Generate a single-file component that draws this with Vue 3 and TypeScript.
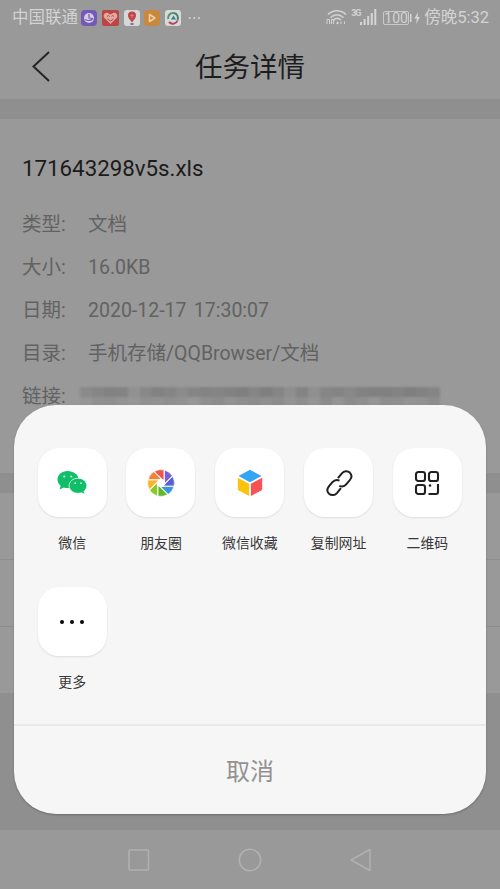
<script setup lang="ts">
interface InfoRow { label: string; value: string }
interface ShareItem { icon: string; label: string }

const info: InfoRow[] = [
  { label: '类型:', value: '文档' },
  { label: '大小:', value: '16.0KB' },
  { label: '日期:', value: '2020-12-17 17:30:07' },
  { label: '目录:', value: '手机存储/QQBrowser/文档' },
  { label: '链接:', value: '' },
]

const shareItems: ShareItem[] = [
  { icon: 'wechat', label: '微信' },
  { icon: 'moments', label: '朋友圈' },
  { icon: 'favorites', label: '微信收藏' },
  { icon: 'link', label: '复制网址' },
  { icon: 'qrcode', label: '二维码' },
  { icon: 'more', label: '更多' },
]

// Shades of the obscured link, one per mosaic cell
const mosaicTop = ['#8a8a8a', '#868686', '#828282', '#838383', '#919191', '#888888', '#828282', '#858585', '#8b8b8b', '#858585', '#838383', '#848484', '#828282', '#7f7f7f', '#858585', '#7f7f7f', '#858585', '#8e8e8e', '#838383', '#8f8f8f', '#868686', '#848484', '#888888', '#828282', '#808080', '#808080', '#838383', '#7f7f7f', '#828282', '#858585']
const mosaicBottom = ['#959595', '#909090', '#8f8f8f', '#929292', '#969696', '#909090', '#929292', '#8f8f8f', '#929292', '#979797', '#8f8f8f', '#8c8c8c', '#929292', '#8f8f8f', '#8c8c8c', '#909090', '#8c8c8c', '#939393', '#8e8e8e', '#959595', '#8b8b8b', '#949494', '#8b8b8b', '#8f8f8f', '#959595', '#8e8e8e', '#8f8f8f', '#949494', '#919191', '#8d8d8d']

// Clockwise from the top blade
const petals = ['#f0564b', '#7a60d8', '#5661d6', '#3c93e0', '#62b82e', '#8cc923', '#f7b52c', '#f48135']
</script>

<template>
  <div class="screen">
    <div class="status">
      <span class="carrier">中国联通</span>
      <div class="apps">
        <svg width="16" height="16" viewBox="0 0 16 16">
          <rect width="16" height="16" rx="4" fill="#7559b6" />
          <circle cx="8" cy="8" r="5" fill="#d6cce8" />
          <path d="M8 4v4l4 .5M4 9.5c3 1.5 6 1.2 8-1" fill="none" stroke="#7559b6" stroke-width="1.2" />
        </svg>
        <svg width="17" height="16" viewBox="0 0 17 16">
          <rect width="17" height="16" rx="2" fill="#be4545" />
          <path d="M8.5 14 2 7.4C1 4.5 3 2.5 5.3 2.8L8.5 4.5l3.2-1.7C14 2.5 16 4.5 15 7.4z" fill="#dfaaa0" />
          <path d="m5 6.500 1.500-1 1 1M9.500 6.500l1-1 1.500 1M5.500 9l3 2 3-2" fill="none" stroke="#be4545" />
        </svg>
        <svg width="16" height="16" viewBox="0 0 16 16">
          <rect width="16" height="16" rx="3" fill="#d7d7d7" />
          <path d="M8 12.500C6.500 10 4 8.500 4 5.500a4 4 0 0 1 8 0c0 3-2.500 4.500-4 7z" fill="#bf4548" />
          <path d="M6.500 5.500h3M8 4v4" stroke="#d68587" />
          <ellipse cx="8" cy="14" rx="2" ry="1" fill="#6876a0" />
        </svg>
        <svg width="16" height="16" viewBox="0 0 16 16">
          <rect width="16" height="16" rx="4" fill="#c9883b" />
          <path d="M5.500 4.500 11 8l-5.500 3.500z" fill="none" stroke="#ead2ad" stroke-width="1.500" stroke-linejoin="round" />
        </svg>
        <svg width="16" height="16" viewBox="0 0 16 16">
          <rect width="16" height="16" rx="3" fill="#d9d9d9" />
          <g fill="none" stroke-width="2">
            <path d="M3.200 9A5 5 0 0 1 9 3" stroke="#4f9b67" />
            <path d="M9 3a5 5 0 0 1 3.500 7" stroke="#4d837b" />
            <path d="M12.500 10.500A5 5 0 0 1 4 12" stroke="#b2465a" />
          </g>
          <path d="M8.500 5.500 11 9.500H6z" fill="#397e91" />
        </svg>
        <svg class="dots" width="13" height="16" viewBox="0 0 13 16" fill="#d0d0d0">
          <circle cx="1.700" cy="8" r="1.100" /><circle cx="6.300" cy="8" r="1.100" /><circle cx="10.900" cy="8" r="1.100" />
        </svg>
      </div>
      <div class="system">
        <svg width="21" height="17" viewBox="0 0 21 17" fill="none" stroke="#d2d2d2" stroke-width="1.700">
          <path d="M2 5.500c5-5 13-5 18 0M4.500 8.500c4-3.700 9-3.700 13 0M7.500 11c2.500-2 5-2 7.300 0" />
          <circle cx="11.500" cy="14" r="1.200" fill="#d2d2d2" stroke="none" />
          <path d="M1 15v-4.500h2.500V15M5.500 15v-4.500h2V15M15 15v-2.500M18.500 15v-2.500" stroke-width="1" />
        </svg>
        <span class="net">3G</span>
        <svg class="signal" width="17" height="16" viewBox="0 0 17 16" fill="#d5d5d5">
          <path d="M0 13h2v3H0zM3.600 10h2v6h-2zM7.200 7h2v9h-2zM10.800 4h2v12h-2zM14.300 0h2v16h-2z" />
        </svg>
        <span class="battery">100</span>
        <svg class="bolt" width="11" height="14" viewBox="0 0 11 14" fill="#d5d5d5">
          <path d="M0 3h1.500v8H0zM8 1 4.500 7.500h2.300L6 13l4-7H7.600z" />
        </svg>
        <span class="clock">傍晚5:32</span>
      </div>
    </div>

    <header class="header">
      <svg class="back" width="20" height="32" viewBox="0 0 20 32">
        <path d="M18 1 2.500 15.500 18 30" fill="none" stroke="#252525" stroke-width="2" />
      </svg>
      <h1>任务详情</h1>
    </header>

    <section class="details">
      <h2>171643298v5s.xls</h2>
      <div v-for="row in info" :key="row.label" class="row">
        <span class="key">{{ row.label }}</span>
        <span v-if="row.value">{{ row.value }}</span>
        <div v-else class="mosaic">
          <i v-for="(c, n) in mosaicTop" :key="'t' + n" :style="{ background: c }"></i>
          <i v-for="(c, n) in mosaicBottom" :key="'b' + n" :style="{ background: c }"></i>
        </div>
      </div>
    </section>

    <section class="actions">
      <div></div><div></div><div></div>
    </section>

    <nav class="nav">
      <svg width="24" height="24" viewBox="0 0 24 24"><rect x="2" y="2" width="19.500" height="20" rx="1" /></svg>
      <svg width="24" height="24" viewBox="0 0 24 24"><circle cx="12" cy="12" r="10.700" /></svg>
      <svg width="24" height="24" viewBox="0 0 24 24"><path d="M21 1.500v21L2 12z" stroke-linejoin="round" /></svg>
    </nav>

    <div class="sheet">
      <div class="grid">
        <div v-for="item in shareItems" :key="item.label" class="item">
          <div class="tile">
            <svg v-if="item.icon === 'wechat'" width="32" height="28" viewBox="0 0 32 28">
              <path d="M11.500 2C5.800 2 1.500 5.700 1.500 10.500c0 2.600 1.200 4.700 3.200 6.300L3.500 20.500l4.300-2a13 13 0 0 0 5.200.4c6-.6 9.500-4 9.500-8.600C22.500 5.600 17.500 2 11.500 2z" fill="#10bd68" />
              <path d="M22 9.200c-5 0-8.900 3.400-8.900 7.600s3.900 7.500 8.900 7.500c1.200 0 2.300-.2 3.400-.5l3.500 1.500-.9-3c1.700-1.500 2.800-3.400 2.800-5.500 0-4.200-3.900-7.600-8.800-7.600z" fill="#10bd68" stroke="#e6fff2" stroke-width=".8" />
              <g fill="#c9f7dd"><circle cx="8.300" cy="7.500" r="1.100" /><circle cx="15.300" cy="7.500" r="1.100" /><circle cx="19.200" cy="14.200" r=".9" /><circle cx="25" cy="14.200" r=".9" /></g>
            </svg>
            <svg v-else-if="item.icon === 'moments'" width="28" height="28" viewBox="-14 -14 28 28">
              <path v-for="(color, n) in petals" :key="n" d="M-6.600-11.600A13.400 13.400 0 0 1 2.900-13.100V-2.100z" :fill="color" stroke="#fff" stroke-width=".6" :transform="`rotate(${n * 45})`" />
              <circle r="4.300" fill="#fff" />
            </svg>
            <svg v-else-if="item.icon === 'favorites'" width="28" height="28" viewBox="0 0 28 28">
              <path d="m14 .8 11.500 6.200L14 13.200 2.500 7z" fill="#32a5f5" />
              <path d="m1.800 8.700 11.300 6v12.200l-10.300-5.500a2 2 0 0 1-1-1.700z" fill="#fac30d" />
              <path d="m26.200 8.700-11.300 6v12.200l10.300-5.500a2 2 0 0 0 1-1.700z" fill="#fa5154" />
            </svg>
            <svg v-else-if="item.icon === 'link'" width="28" height="28" viewBox="0 0 28 28" fill="none" stroke="#202020" stroke-width="2">
              <path d="M12.900 9.200 16.900 4.300C19 1.900 22.500 1.600 24.800 3.600 27 5.800 26.900 8.500 24.900 11L21.400 15.200C19.500 17.500 16.900 18 14.300 16.800" />
              <path d="M15.900 19.200 11.900 24.100C9.800 26.500 6.300 26.800 4 24.800 1.800 22.600 1.900 19.900 3.900 17.400L7.400 13.200C9.300 10.900 11.900 10.400 14.500 11.600" />
            </svg>
            <svg v-else-if="item.icon === 'qrcode'" width="26" height="26" viewBox="0 0 26 26" fill="none" stroke="#202020" stroke-width="2.100">
              <rect x="2" y="2" width="9" height="9" rx="2.300" /><rect x="15" y="2" width="9" height="9" rx="2.300" /><rect x="2" y="15" width="9" height="9" rx="2.300" />
              <path d="M24 14v8q0 2-2 2h-7.500" />
              <circle cx="16" cy="15.500" r="1.300" fill="#202020" stroke="none" />
            </svg>
            <svg v-else width="28" height="8" viewBox="0 0 28 8" fill="#080808">
              <circle cx="4" cy="4" r="2" /><circle cx="14" cy="4" r="2" /><circle cx="24" cy="4" r="2" />
            </svg>
          </div>
          <span>{{ item.label }}</span>
        </div>
      </div>
      <div class="cancel">取消</div>
    </div>
  </div>
</template>

<style>
body { margin: 0; }
</style>

<style scoped>
.screen {
  position: relative;
  width: 500px;
  height: 889px;
  overflow: hidden;
  display: flex;
  flex-direction: column;
  background: #8f8f8f;
  font-family: Roboto, "Noto Sans CJK SC", sans-serif;
}
.status {
  box-sizing: border-box;
  height: 34px;
  padding: 1px 11px 0 12px;
  display: flex;
  align-items: center;
  background: #999;
  color: #d3d3d3;
  font-size: 16.5px;
  line-height: 33px;
  white-space: nowrap;
}
.carrier { width: 69px; }
.apps { display: flex; align-items: center; gap: 4.8px; }
.dots { margin-left: 2px; }
.system { margin-left: auto; display: flex; align-items: center; }
.net { align-self: flex-start; margin: 8px 0 0 4px; width: 9px; font-size: 9px; line-height: 9px; font-weight: 700; letter-spacing: -1px; }
.signal { margin-top: -2px; }
.battery { box-sizing: border-box; width: 26px; height: 14px; margin-left: 6px; border: 1px solid #c9c9c9; border-radius: 2px; font-size: 14px; line-height: 13px; text-align: center; }
.bolt { margin-left: 1px; margin-right: 3px; }
.header {
  height: 65px;
  display: grid;
  grid-template-columns: 60px 1fr 60px;
  align-items: center;
  background: #999;
}
.back { margin-left: 31px; }
h1 { margin: 2px 0 0; color: #1d1d1d; font-size: 27.5px; line-height: 40px; font-weight: 400; text-align: center; }
.details {
  box-sizing: border-box;
  height: 354px;
  margin-top: 20px;
  padding: 34px 22px 0;
  background: #999;
  color: #626262;
}
h2 { margin: 0 0 20px; color: #1b1b1b; font-size: 22.3px; line-height: 30px; font-weight: 400; }
.row { height: 43px; display: flex; align-items: center; font-size: 19.5px; line-height: 36px; word-spacing: 2.5px; white-space: nowrap; }
.key { width: 66px; flex: none; }
.mosaic { display: grid; grid-template-columns: repeat(30, 12px); grid-template-rows: 10px 10px; margin: 1px 0 0 -8px; filter: blur(1px); }
.actions { margin-top: 20px; height: 200px; display: grid; grid-template-rows: 66px 66px 66px; gap: 1px; background: #8e8e8e; }
.actions div { background: #999; }
.nav { margin-top: auto; height: 59px; display: flex; justify-content: center; align-items: center; gap: 87px; background: #999; }
.nav svg { fill: none; stroke: #b0b0b0; stroke-width: 1.6; }
.sheet {
  position: absolute;
  left: 14px;
  top: 405px;
  width: 472px;
  height: 409px;
  border-radius: 42px;
  background: #f6f6f6;
  box-shadow: 0 1px 2px rgba(0, 0, 0, .25);
  display: flex;
  flex-direction: column;
}
.grid {
  box-sizing: border-box;
  height: 319px;
  padding: 43px 0 0 13.8px;
  display: grid;
  grid-template-columns: repeat(5, 88.8px);
  grid-auto-rows: 139px;
}
.item { display: flex; flex-direction: column; align-items: center; gap: 15px; }
.item span { color: #383838; font-size: 13.9px; line-height: 22px; }
.tile { width: 69px; height: 69px; display: grid; place-items: center; border-radius: 21px; background: #fff; box-shadow: 0 1px 2px rgba(0, 0, 0, .1); }
.cancel { flex: 1; display: flex; align-items: center; justify-content: center; padding-bottom: 2px; border-top: 2px solid #e9e9e9; color: #929292; font-size: 24px; }
</style>
